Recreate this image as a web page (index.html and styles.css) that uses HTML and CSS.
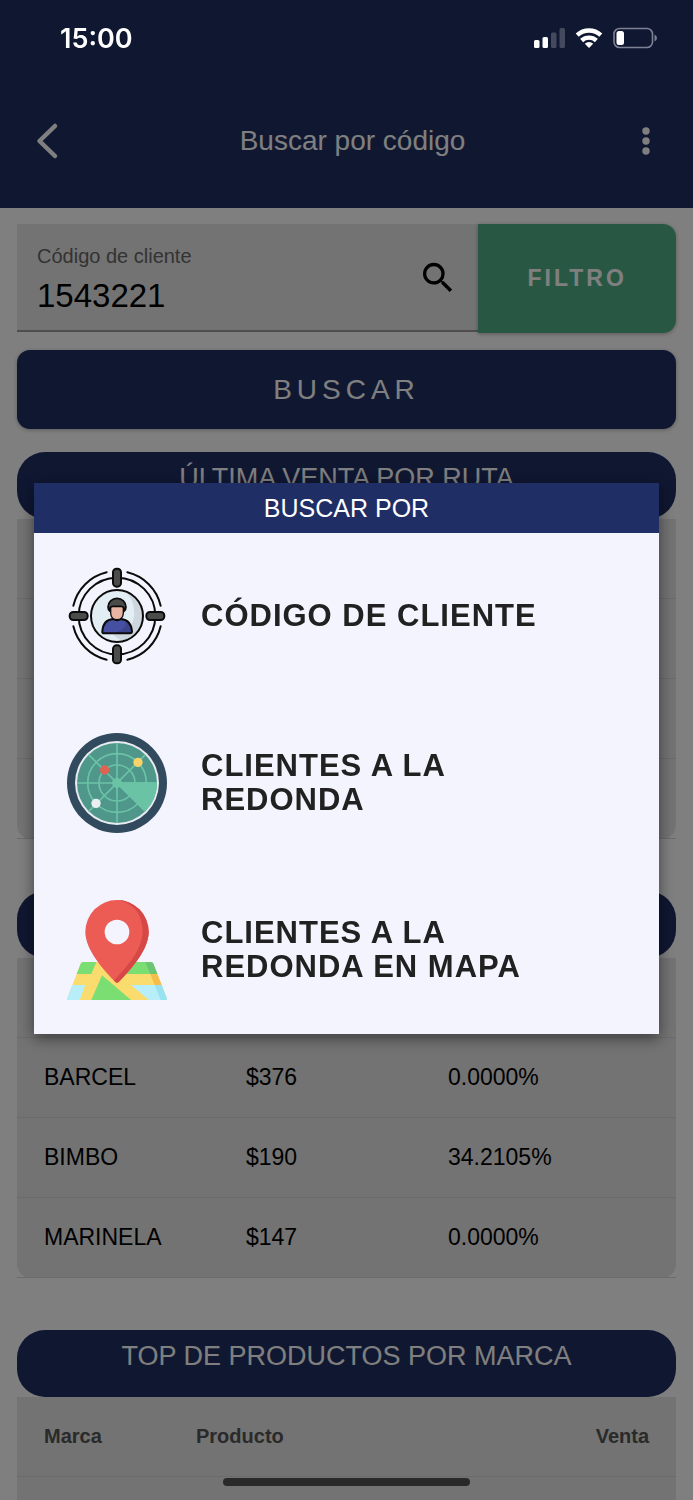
FILE: index.html
```html
<!DOCTYPE html>
<html lang="es">
<head>
    <meta charset="UTF-8">
    <meta name="viewport" content="width=device-width, initial-scale=1">
    <title>Buscar por código</title>
    <link rel="stylesheet" href="styles.css">
</head>
<body>
    <header class="header">
        <div class="status-bar">
            <span class="status-time">15:00</span>
            <svg class="status-icons" width="126" height="24" viewBox="0 0 126 24">
                <g fill="#fff">
                    <rect x="1" y="14" width="5.5" height="8" rx="1.5"/>
                    <rect x="9.5" y="11" width="5.5" height="11" rx="1.5"/>
                    <rect x="18" y="6.5" width="5.5" height="15.5" rx="1.5" opacity=".22"/>
                    <rect x="26.5" y="2" width="5.5" height="20" rx="1.5" opacity=".22"/>
                </g>
                <g fill="none" stroke="#fff" stroke-width="4.4">
                    <path d="M44.2 9.1a17.5 17.5 0 0 1 23.6 0"/>
                    <path d="M48.6 14.5a11 11 0 0 1 14.8 0"/>
                </g>
                <path d="M56 22l-4.2-4.2a6 6 0 0 1 8.4 0z" fill="#fff"/>
                <rect x="81" y="2.5" width="38.5" height="19" rx="5.5" fill="none" stroke="#7d8194" stroke-width="1.6"/>
                <rect x="83.5" y="5" width="7.5" height="14" rx="2.5" fill="#fff"/>
                <path d="M121.5 8.5q2.5 1 2.5 3.5t-2.5 3.5z" fill="#7d8194"/>
            </svg>
        </div>
        <div class="toolbar">
            <button class="icon-button back-button" aria-label="Volver">
                <svg width="28" height="40" viewBox="0 0 28 40" fill="none" stroke="#fff" stroke-width="4.5" stroke-linecap="round" stroke-linejoin="round">
                    <path d="M22 5L6.500 20l15.500 15"/>
                </svg>
            </button>
            <h1 class="title">Buscar por código</h1>
            <button class="icon-button" aria-label="Opciones">
                <svg width="28" height="40" viewBox="0 0 28 40" fill="#fff">
                    <circle cx="14" cy="10" r="3.700"/>
                    <circle cx="14" cy="20" r="3.700"/>
                    <circle cx="14" cy="30" r="3.700"/>
                </svg>
            </button>
        </div>
    </header>

    <main class="content">
        <form class="search">
            <div class="search-row">
                <div class="field">
                    <div class="field-text">
                        <label for="codigo">Código de cliente</label>
                        <input type="text" id="codigo" value="1543221">
                    </div>
                    <svg width="40" height="40" viewBox="0 0 24 24">
                        <path d="M15.500 14.500h-.79l-.28-.27A6.471 6.471 0 0 0 16 10 6.500 6.500 0 1 0 9.500 16.500c1.610 0 3.090-.59 4.230-1.570l.27.28v.79l5 4.990L20.490 19.500l-4.990-5zm-6 0C7.010 14.500 5 12.490 5 10S7.010 5.500 9.500 5.500 14 7.510 14 10 11.990 14.500 9.500 14.500z"/>
                    </svg>
                </div>
                <button type="button" class="filter-button">FILTRO</button>
            </div>
            <button type="button" class="search-button">BUSCAR</button>
        </form>

        <section class="card">
            <h2>ÚLTIMA VENTA POR RUTA</h2>
            <table>
                <tr><td></td></tr>
                <tr><td></td></tr>
                <tr><td></td></tr>
                <tr><td></td></tr>
            </table>
        </section>

        <section class="card">
            <h2></h2>
            <table class="brands">
                <tr><td></td><td></td><td></td></tr>
                <tr><td>BARCEL</td><td>$376</td><td>0.0000%</td></tr>
                <tr><td>BIMBO</td><td>$190</td><td>34.2105%</td></tr>
                <tr><td>MARINELA</td><td>$147</td><td>0.0000%</td></tr>
            </table>
        </section>

        <section class="card">
            <h2>TOP DE PRODUCTOS POR MARCA</h2>
            <table class="products">
                <tr><th>Marca</th><th>Producto</th><th>Venta</th></tr>
                <tr><td></td><td></td><td></td></tr>
            </table>
        </section>
    </main>

    <div class="overlay">
        <div class="modal" role="dialog" aria-labelledby="modalTitle">
            <h2 class="modal-title" id="modalTitle">BUSCAR POR</h2>
            <div class="options">
                <button class="option">
                    <svg width="100" height="100" viewBox="-150 -150 300 300">
                        <g fill="none" stroke="#0b0b0b" stroke-width="6" stroke-linecap="round">
                            <circle r="115"/>
                            <path d="M-31-131A134.600 134.600 0 0 0-131-31M31-131A134.600 134.600 0 0 1 131-31M131 31A134.600 134.600 0 0 1 31 131M-31 131A134.600 134.600 0 0 1-131 31"/>
                        </g>
                        <circle r="78" fill="#e3edf4"/>
                        <path d="M22-75A78 78 0 0 1 20 75Q4 70-12 56Q52 42 52-8Q52-52 22-75z" fill="#ced7df"/>
                        <circle r="78" fill="none" stroke="#0b0b0b" stroke-width="6"/>
                        <g fill="#4b4b4b" stroke="#0b0b0b" stroke-width="6">
                            <rect x="-12" y="-142" width="24" height="54" rx="11"/>
                            <rect x="-12" y="88" width="24" height="54" rx="11"/>
                            <rect x="-142" y="-12" width="54" height="24" rx="11"/>
                            <rect x="88" y="-12" width="54" height="24" rx="11"/>
                        </g>
                        <path d="M-44 52Q-45 12-12 9H12Q45 12 44 52z" fill="#4650a2"/>
                        <path d="M12 9Q45 12 44 52H-15Q34 42 25 11z" fill="#3c448c"/>
                        <path d="M-44 46Q-42 12-12 9Q0 16 12 9Q42 12 45 46Q45 52 39 52H-39Q-45 52-44 46z" fill="none" stroke="#0b0b0b" stroke-width="6" stroke-linejoin="round"/>
                        <path d="M-19-30V-9Q-18 11 0 11T19-9V-30z" fill="#e8b5a5" stroke="#0b0b0b" stroke-width="4"/>
                        <path d="M-21-14Q-27-18-27-27A27 26 0 0 1 27-27Q27-18 21-14V-25Q18-29 12-29H-12Q-18-29-21-25z" fill="#4b4b4b" stroke="#0b0b0b" stroke-width="5" stroke-linejoin="round"/>
                    </svg>
                    <span>CÓDIGO DE CLIENTE</span>
                </button>
                <button class="option">
                    <svg width="100" height="100" viewBox="-150 -150 300 300">
                        <circle r="150" fill="#324a5e"/>
                        <circle r="126" fill="#e8ecf1"/>
                        <circle r="120" fill="#4f978b"/>
                        <path d="M-85 85A120 120 0 0 1 85-85A112 112 0 0 0-85 85z" fill="#5aa79b"/>
                        <g fill="none" stroke="#6bc3a6" stroke-width="5">
                            <circle r="88"/>
                            <circle r="54"/>
                            <path d="M-120 0H120M0-120V120M-85-85L85 85M-85 85L85-85"/>
                        </g>
                        <path d="M0-2H120Q120 50 85 85L-2 2z" fill="#6bc3a6"/>
                        <circle r="15" fill="#6bc3a6"/>
                        <circle cx="-37" cy="-39" r="14" fill="#dd6452"/>
                        <circle cx="63" cy="-62" r="14" fill="#f7d36a"/>
                        <circle cx="-63" cy="61" r="14" fill="#eceff2"/>
                    </svg>
                    <span>CLIENTES A LA REDONDA</span>
                </button>
                <button class="option">
                    <svg width="100" height="100" viewBox="0 0 300 300">
                        <path d="M50 186H250Q256 186 259 191L300 296Q301 300 296 300H4Q-1 300 0 296L41 191Q43 186 50 186z" fill="#fadc6e"/>
                        <path d="M48 186H88L73 222H29L41 191Q43 186 48 186z" fill="#7ade72"/>
                        <path d="M16 255H55L38 300H4Q-1 300 0 296z" fill="#b7eef9"/>
                        <path d="M105 226L192 300H73z" fill="#7ade72"/>
                        <path d="M178 222L208 186H251Q257 186 259 191L271 222z" fill="#7ade72"/>
                        <path d="M192 255H284L300 296Q301 300 296 300H246z" fill="#b7eef9"/>
                        <path d="M235 186H252Q257 186 259 191L271 222H250z" fill="#6bc572"/>
                        <path d="M250 222H271L284 255H263z" fill="#f6bd4c"/>
                        <path d="M263 255H284L300 296Q301 300 296 300H281z" fill="#98e3ef"/>
                        <path d="M150 0A95 96 0 0 1 245 96C245 150 190 210 155 246Q150 250 145 246C110 210 55 150 55 96A95 96 0 0 1 150 0z" fill="#ec5b54"/>
                        <path d="M150 0A95 96 0 0 1 245 96C245 150 190 210 155 246Q150 250 145 246L141 241C190 190 227 145 227 90Q222 12 150 0z" fill="#d54846"/>
                        <circle cx="150" cy="96" r="37" fill="#f4f4fe"/>
                    </svg>
                    <span>CLIENTES A LA REDONDA EN MAPA</span>
                </button>
            </div>
        </div>
    </div>

    <div class="home-indicator"></div>
</body>
</html>
```

FILE: styles.css
```css
* {
    box-sizing: border-box;
}
body {
    display: flex;
    flex-direction: column;
    margin: 0;
    height: 100vh;
    background-color: #fff;
    font-family: "Liberation Sans", Arial, sans-serif;
    color: #000;
}
h1, h2 {
    margin: 0;
    font-weight: normal;
}
button {
    border: none;
    padding: 0;
    font-family: inherit;
    cursor: pointer;
}

/* Encabezado */
.header {
    flex-shrink: 0;
    background-color: #202e63;
    color: #fff;
    padding-bottom: 2px;
}
.status-bar {
    position: relative;
    z-index: 20;
    display: flex;
    align-items: center;
    justify-content: space-between;
    height: 76px;
    padding: 0 34px 0 60px;
}
.status-time {
    font-family: Inter, sans-serif;
    font-size: 27px;
    font-weight: 600;
}
.toolbar {
    display: flex;
    align-items: center;
    height: 130px;
    padding: 0 33px;
}
.icon-button {
    display: flex;
    background: none;
}
.back-button {
    width: 40px;
}
.title {
    flex: 1;
    text-align: center;
    font-size: 28px;
}

/* Buscador */
.content {
    flex: 1;
    min-height: 0;
    overflow: hidden;
    padding: 16px 17px 0;
}
.search {
    margin-bottom: 23px;
}
.search-row {
    display: flex;
    margin-bottom: 17px;
}
.field {
    width: 70%;
    display: flex;
    align-items: center;
    height: 108px;
    padding: 0 20px;
    background-color: #e6e6e6;
    border-bottom: 2px solid #9c9c9c;
}
.field-text {
    flex: 1;
    min-width: 0;
    padding-top: 14px;
}
.field label {
    display: block;
    font-size: 20px;
    line-height: 24px;
    color: #666;
}
.field input {
    display: block;
    width: 100%;
    height: 56px;
    padding: 0;
    border: none;
    outline: none;
    background: none;
    font-family: inherit;
    font-size: 33px;
}
.filter-button {
    width: 30%;
    height: 109px;
    border-radius: 0 13px 13px 0;
    background-color: #50b086;
    color: #fff;
    font-size: 23px;
    font-weight: bold;
    letter-spacing: 3px;
    box-shadow: 0 1px 4px rgba(0, 0, 0, 0.3);
}
.search-button {
    display: block;
    width: 100%;
    height: 79px;
    border-radius: 13px;
    background-color: #202e63;
    color: #fff;
    font-size: 28px;
    letter-spacing: 5px;
    box-shadow: 0 1px 4px rgba(0, 0, 0, 0.3);
}

/* Tablas */
.card {
    margin-bottom: 52px;
}
.card h2 {
    height: 67px;
    padding-top: 9px;
    border-radius: 28px;
    background-color: #202e63;
    color: #fff;
    font-size: 27px;
    line-height: 34px;
    text-align: center;
}
table {
    width: 100%;
    table-layout: fixed;
    border-spacing: 0;
    background-color: #e6e6e6;
    border-radius: 0 0 14px 14px;
}
td, th {
    height: 80px;
    padding: 0;
    border-bottom: 1px solid #d6d6d6;
    font-size: 23px;
    text-align: left;
}
th {
    font-size: 20px;
    color: #555;
}
td:first-child, th:first-child {
    padding-left: 27px;
}
.brands td:first-child {
    width: 229px;
}
.brands td:nth-child(2) {
    width: 202px;
}
.products th:first-child {
    width: 179px;
}
.products th:last-child {
    padding-right: 27px;
    text-align: right;
}

/* Modal */
.overlay {
    position: fixed;
    inset: 0;
    z-index: 10;
    display: flex;
    align-items: center;
    justify-content: center;
    padding: 16px 34px 0;
    background-color: rgba(0, 0, 0, 0.5);
}
.modal {
    width: 100%;
    background-color: #f4f4fe;
    box-shadow: 0 4px 14px rgba(0, 0, 0, 0.5);
}
.modal-title {
    background-color: #202e66;
    color: #fff;
    font-size: 25px;
    line-height: 50px;
    text-align: center;
}
.option {
    display: flex;
    align-items: center;
    gap: 34px;
    width: 100%;
    height: 167px;
    padding: 0 33px;
    background: none;
    color: #212121;
    font-size: 31px;
    font-weight: bold;
    line-height: 34px;
    letter-spacing: 1px;
    text-align: left;
}
.option svg {
    flex-shrink: 0;
}
.option span {
    max-width: 340px;
}

.home-indicator {
    position: fixed;
    z-index: 20;
    bottom: 14px;
    left: 50%;
    width: 247px;
    height: 8px;
    margin-left: -124px;
    border-radius: 4px;
    background-color: #292929;
}
```
